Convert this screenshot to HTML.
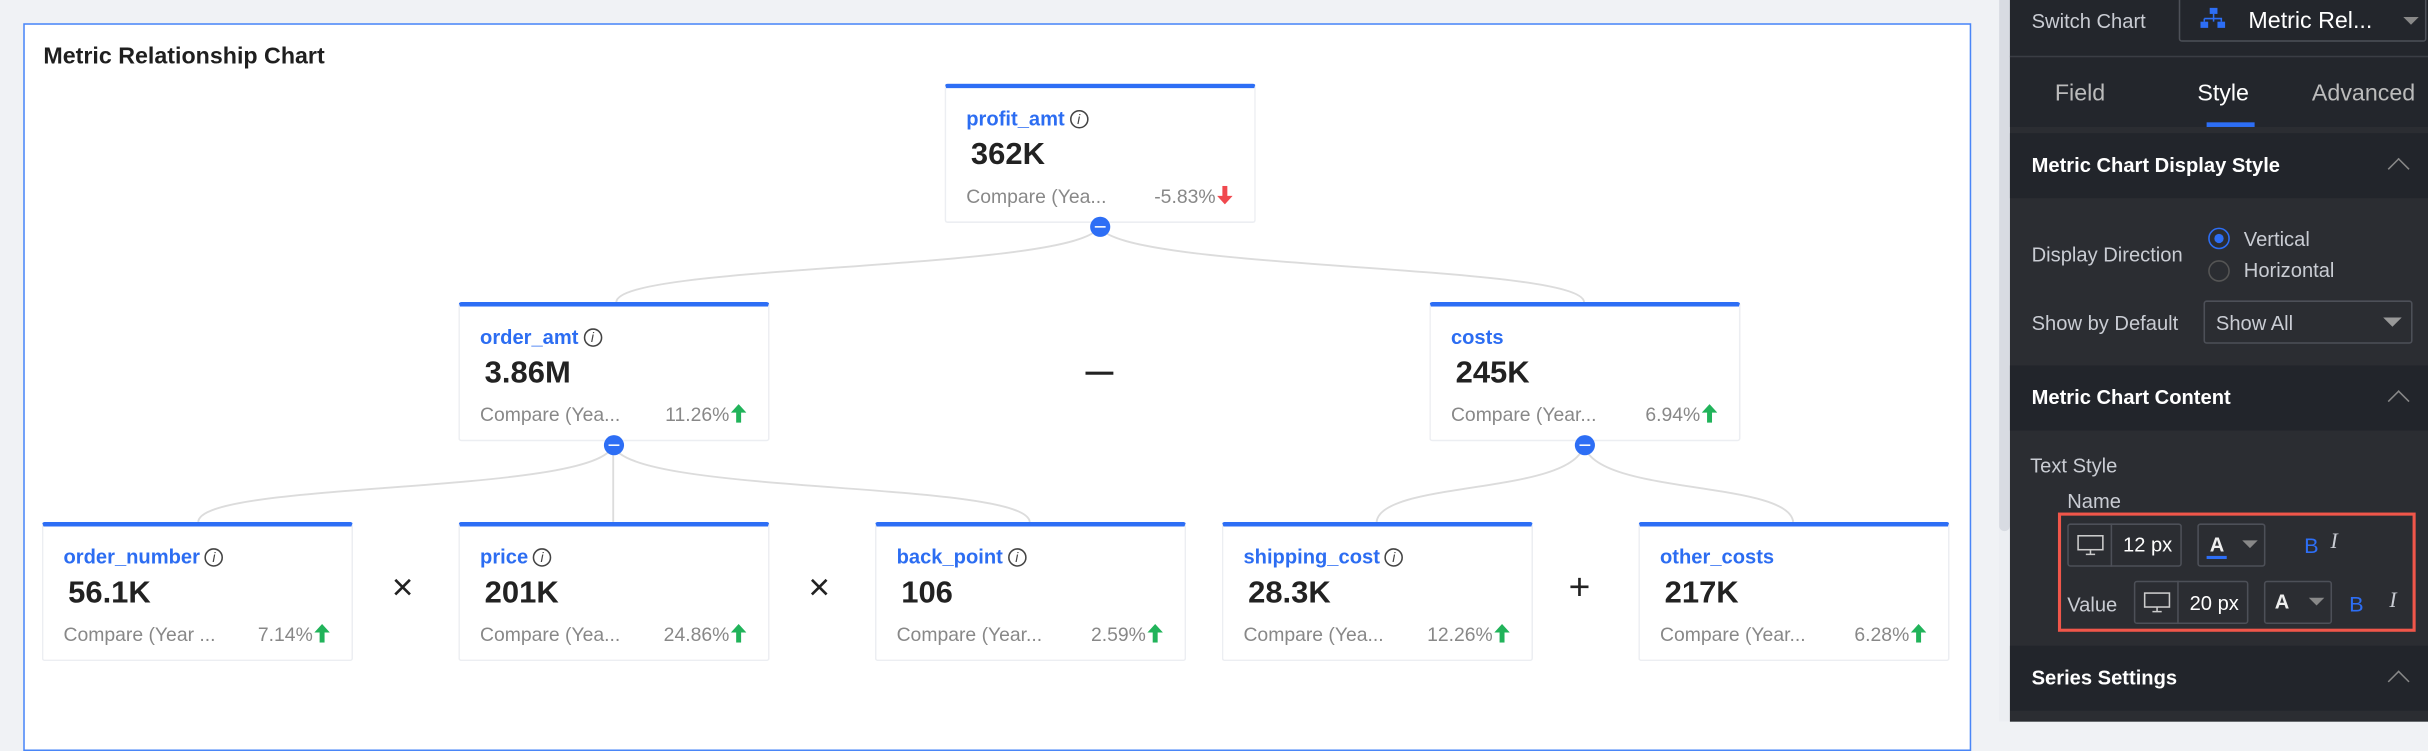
<!DOCTYPE html>
<html><head><meta charset="utf-8"><style>
*{margin:0;padding:0;box-sizing:border-box}
html,body{width:2428px;height:722px;overflow:hidden;background:#f0f2f5}
#w{position:absolute;left:0;top:0;width:1568px;height:466px;transform:scale(1.5485);transform-origin:0 0;font-family:"Liberation Sans",sans-serif}
.a{position:absolute}
.chart{left:15px;top:15px;width:1258px;height:470px;background:#fff;border:1px solid #4a86f7}
.title{left:28px;top:28px;font-size:15px;font-weight:bold;color:#1f1f1f}
.card{position:absolute;width:201px;height:90px;background:#fff;border:1px solid #eceef2;border-top:3px solid #2d6ef5;border-radius:2px}
.card .n{position:absolute;left:13px;top:12px;font-size:13px;font-weight:bold;color:#2c6df2;white-space:nowrap}
.card .n i{display:inline-block;width:12px;height:12px;border:1px solid #444;border-radius:50%;font-size:9px;font-style:italic;color:#444;text-align:center;line-height:10px;margin-left:3px;font-weight:normal;vertical-align:1px}
.card .v{position:absolute;left:16px;top:32px;font-size:20px;font-weight:bold;color:#222}
.card .c{position:absolute;left:13px;top:63px;font-size:12.5px;color:#888;line-height:14px}
.card .p{position:absolute;right:14px;top:63px;font-size:12.5px;color:#888;line-height:14px;white-space:nowrap}
.card .p svg{vertical-align:-1px;margin-left:1px}
.dot{position:absolute;width:13px;height:13px;border-radius:50%;background:#2d6ef5}
.dot:after{content:"";position:absolute;left:3px;top:6px;width:7px;height:1px;background:#fff}
.op{position:absolute;font-size:24px;color:#222}
.panel{left:1298px;top:0;width:270px;height:466px;background:#2b2d32;color:#c9ccd3;font-size:13px}
.hd{position:absolute;left:0;width:270px;height:42px;background:#22252b;color:#fff;font-weight:bold;font-size:13px;padding:13px 14px}
.hd:after{content:"";position:absolute;right:14px;top:18px;width:9px;height:9px;border-left:1px solid #888;border-top:1px solid #888;transform:rotate(45deg)}
.bx{position:absolute;border:1px solid #4d5058;border-radius:2px}
</style></head><body><div id="w">
<svg width="0" height="0" style="position:absolute"><defs>
<symbol id="up" viewBox="0 0 10 12"><path d="M5 0L10 5.5H6.6V12H3.4V5.5H0Z" fill="#21b35a"/></symbol>
<symbol id="dn" viewBox="0 0 10 12"><path d="M5 12L10 6.5H6.6V0H3.4V6.5H0Z" fill="#f0484e"/></symbol>
</defs></svg>
<div class="a chart"></div>
<div class="a title">Metric Relationship Chart</div>
<svg class="a" style="left:0;top:0" width="1290" height="466" fill="none" stroke="#dcdcdc" stroke-width="1.2">
<path d="M710 146 C700 175 400 170 398 195"/><path d="M710 146 C720 175 1020 170 1023 195"/>
<path d="M396 287 C390 320 130 310 128 337"/><path d="M396 287 L396 337"/><path d="M396 287 C402 320 662 310 665 337"/>
<path d="M1023 287 C1017 320 892 310 889 337"/><path d="M1023 287 C1029 320 1155 310 1158 337"/>
</svg>
<div class="card" style="left:610px;top:54px"><div class="n">profit_amt<i>i</i></div><div class="v">362K</div><div class="c">Compare (Yea...</div><div class="p">-5.83%<svg width="10" height="12"><use href="#dn"/></svg></div></div>
<div class="card" style="left:296px;top:195px"><div class="n">order_amt<i>i</i></div><div class="v">3.86M</div><div class="c">Compare (Yea...</div><div class="p">11.26%<svg width="10" height="12"><use href="#up"/></svg></div></div>
<div class="card" style="left:923px;top:195px"><div class="n">costs</div><div class="v">245K</div><div class="c">Compare (Year...</div><div class="p">6.94%<svg width="10" height="12"><use href="#up"/></svg></div></div>
<div class="card" style="left:27px;top:337px"><div class="n">order_number<i>i</i></div><div class="v">56.1K</div><div class="c">Compare (Year ...</div><div class="p">7.14%<svg width="10" height="12"><use href="#up"/></svg></div></div>
<div class="card" style="left:296px;top:337px"><div class="n">price<i>i</i></div><div class="v">201K</div><div class="c">Compare (Yea...</div><div class="p">24.86%<svg width="10" height="12"><use href="#up"/></svg></div></div>
<div class="card" style="left:565px;top:337px"><div class="n">back_point<i>i</i></div><div class="v">106</div><div class="c">Compare (Year...</div><div class="p">2.59%<svg width="10" height="12"><use href="#up"/></svg></div></div>
<div class="card" style="left:789px;top:337px"><div class="n">shipping_cost<i>i</i></div><div class="v">28.3K</div><div class="c">Compare (Yea...</div><div class="p">12.26%<svg width="10" height="12"><use href="#up"/></svg></div></div>
<div class="card" style="left:1058px;top:337px"><div class="n">other_costs</div><div class="v">217K</div><div class="c">Compare (Year...</div><div class="p">6.28%<svg width="10" height="12"><use href="#up"/></svg></div></div>
<div class="dot" style="left:704px;top:140px"></div><div class="dot" style="left:390px;top:281px"></div><div class="dot" style="left:1017px;top:281px"></div>
<div class="a" style="left:701px;top:240px;width:18px;height:2px;background:#222"></div>
<div class="op" style="left:253px;top:366px">×</div><div class="op" style="left:522px;top:366px">×</div><div class="op" style="left:1013px;top:366px">+</div>
<div class="a" style="left:1291px;top:0;width:7px;height:466px;background:#eceef2"></div>
<div class="a" style="left:1291px;top:0;width:7px;height:343px;background:#d8dbe2;border-radius:0 0 4px 4px"></div>
<div class="a panel">
<div class="a" style="left:0;top:0;width:270px;height:82px;background:#23262c"></div>
<div class="a" style="left:0;top:36px;width:270px;height:1px;background:#3a3d44"></div>
<div class="a" style="left:14px;top:6px;color:#c9ccd3">Switch Chart</div>
<div class="bx" style="left:109px;top:-2px;width:160px;height:29px"></div>
<svg class="a" style="left:123px;top:5px" width="16" height="14"><rect x="6" y="0" width="5" height="4" fill="#2d6ef5"/><rect x="0" y="9" width="5" height="4" fill="#2d6ef5"/><rect x="11" y="9" width="5" height="4" fill="#2d6ef5"/><path d="M8.5 4V9M2.5 7H13.5V9M2.5 7V9" stroke="#2d6ef5" fill="none"/></svg>
<div class="a" style="left:154px;top:5px;color:#fff;font-size:15px">Metric Rel...</div>
<div class="a" style="left:254px;top:11px;border:5px solid transparent;border-top:5px solid #888"></div>
<div class="a" style="left:29px;top:52px;font-size:15px;color:#bbb">Field</div>
<div class="a" style="left:121px;top:52px;font-size:15px;color:#fff">Style</div>
<div class="a" style="left:195px;top:52px;font-size:15px;color:#bbb">Advanced</div>
<div class="a" style="left:127px;top:79px;width:31px;height:3px;background:#2d6ef5"></div>
<div class="hd" style="top:86px">Metric Chart Display Style</div>
<div class="a" style="left:14px;top:157px">Display Direction</div>
<div class="a" style="left:128px;top:147px;width:14px;height:14px;border-radius:50%;border:1px solid #2d6ef5"><div style="margin:3px;width:6px;height:6px;border-radius:50%;background:#2d6ef5"></div></div>
<div class="a" style="left:128px;top:168px;width:14px;height:14px;border-radius:50%;border:1px solid #555"></div>
<div class="a" style="left:151px;top:147px">Vertical</div>
<div class="a" style="left:151px;top:167px">Horizontal</div>
<div class="a" style="left:14px;top:201px">Show by Default</div>
<div class="bx" style="left:125px;top:194px;width:135px;height:28px"></div>
<div class="a" style="left:133px;top:201px">Show All</div>
<div class="a" style="left:241px;top:205px;border:6px solid transparent;border-top:6px solid #999"></div>
<div class="hd" style="top:236px">Metric Chart Content</div>
<div class="a" style="left:13px;top:293px">Text Style</div>
<div class="a" style="left:37px;top:316px">Name</div>
<div class="a" style="left:31px;top:331px;width:231px;height:77px;border:2px solid #f0564a"></div>
<div class="bx" style="left:37px;top:338px;width:74px;height:28px"></div><div class="a" style="left:65px;top:338px;width:1px;height:28px;background:#4d5058"></div>
<div class="a" style="left:73px;top:344px;color:#fff">12 px</div>
<div class="bx" style="left:121px;top:338px;width:44px;height:28px"></div>
<div class="a" style="left:129px;top:344px;color:#eee;font-weight:bold">A</div><div class="a" style="left:127px;top:359px;width:13px;height:2px;background:#2d6ef5"></div>
<div class="a" style="left:150px;top:349px;border:5px solid transparent;border-top:5px solid #888"></div>
<div class="a" style="left:190px;top:344px;color:#2d6ef5;font-size:14px">B</div><div class="a" style="left:207px;top:343px;font-style:italic;font-family:'Liberation Serif',serif;font-size:14px">I</div>
<div class="a" style="left:37px;top:383px">Value</div>
<div class="bx" style="left:80px;top:375px;width:74px;height:28px"></div><div class="a" style="left:108px;top:375px;width:1px;height:28px;background:#4d5058"></div>
<div class="a" style="left:116px;top:382px;color:#fff">20 px</div>
<div class="bx" style="left:164px;top:375px;width:44px;height:28px"></div>
<div class="a" style="left:171px;top:381px;color:#eee;font-weight:bold">A</div>
<div class="a" style="left:193px;top:386px;border:5px solid transparent;border-top:5px solid #888"></div>
<div class="a" style="left:219px;top:382px;color:#2d6ef5;font-size:14px">B</div><div class="a" style="left:245px;top:381px;font-style:italic;font-family:'Liberation Serif',serif;font-size:14px">I</div>
<svg class="a" style="left:43px;top:345px" width="18" height="14" fill="none" stroke="#ccc"><rect x="1" y="1" width="16" height="9"/><path d="M6 13H12M9 10V13"/></svg>
<svg class="a" style="left:86px;top:382px" width="18" height="14" fill="none" stroke="#ccc"><rect x="1" y="1" width="16" height="9"/><path d="M6 13H12M9 10V13"/></svg>
<div class="hd" style="top:417px">Series Settings</div>
<div class="a" style="left:0;top:459px;width:270px;height:7px;background:#2b2d32"></div>
</div>
</div></body></html>
